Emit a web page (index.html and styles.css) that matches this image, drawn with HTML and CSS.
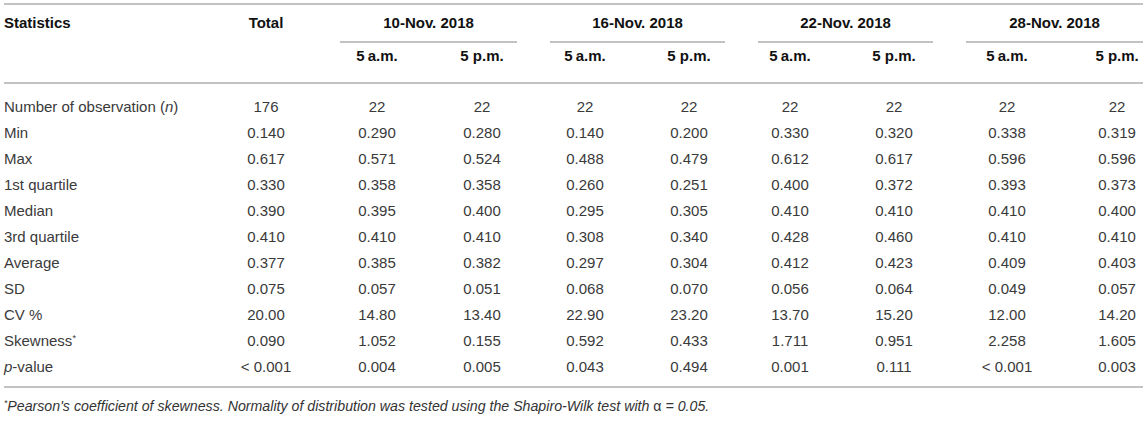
FILE: index.html
```html
<!DOCTYPE html>
<html lang="en">
<head>
    <meta charset="UTF-8">
    <meta name="viewport" content="width=device-width, initial-scale=1.0">
    <title>Descriptive Statistics</title>
    <link rel="stylesheet" href="styles.css">
</head>
<body>

    <div class="page">
        <table class="stats">
            <colgroup>
                <col class="col-label">
                <col class="col-total">
                <col class="col-a">
                <col class="col-b">
                <col class="col-b">
                <col class="col-c">
                <col class="col-d">
                <col class="col-e">
                <col class="col-f">
                <col class="col-g">
            </colgroup>
            <thead>
                <!-- Dates -->
                <tr class="dates">
                    <th class="label">Statistics</th>
                    <th>Total</th>
                    <th colspan="2"><div class="group">10-Nov. 2018</div></th>
                    <th colspan="2"><div class="group">16-Nov. 2018</div></th>
                    <th colspan="2"><div class="group">22-Nov. 2018</div></th>
                    <th colspan="2"><div class="group">28-Nov. 2018</div></th>
                </tr>
                <!-- Times -->
                <tr class="sub">
                    <th class="label"></th>
                    <th></th>
                    <th>5&#8201;a.m.</th>
                    <th>5 p.m.</th>
                    <th>5&#8201;a.m.</th>
                    <th>5 p.m.</th>
                    <th>5&#8201;a.m.</th>
                    <th>5 p.m.</th>
                    <th>5&#8201;a.m.</th>
                    <th>5 p.m.</th>
                </tr>
            </thead>
            <tbody>
                <tr>
                    <td class="label">Number of observation (<i>n</i>)</td>
                    <td>176</td><td>22</td><td>22</td><td>22</td><td>22</td><td>22</td><td>22</td><td>22</td><td>22</td>
                </tr>
                <tr>
                    <td class="label">Min</td>
                    <td>0.140</td><td>0.290</td><td>0.280</td><td>0.140</td><td>0.200</td><td>0.330</td><td>0.320</td><td>0.338</td><td>0.319</td>
                </tr>
                <tr>
                    <td class="label">Max</td>
                    <td>0.617</td><td>0.571</td><td>0.524</td><td>0.488</td><td>0.479</td><td>0.612</td><td>0.617</td><td>0.596</td><td>0.596</td>
                </tr>
                <tr>
                    <td class="label">1st quartile</td>
                    <td>0.330</td><td>0.358</td><td>0.358</td><td>0.260</td><td>0.251</td><td>0.400</td><td>0.372</td><td>0.393</td><td>0.373</td>
                </tr>
                <tr>
                    <td class="label">Median</td>
                    <td>0.390</td><td>0.395</td><td>0.400</td><td>0.295</td><td>0.305</td><td>0.410</td><td>0.410</td><td>0.410</td><td>0.400</td>
                </tr>
                <tr>
                    <td class="label">3rd quartile</td>
                    <td>0.410</td><td>0.410</td><td>0.410</td><td>0.308</td><td>0.340</td><td>0.428</td><td>0.460</td><td>0.410</td><td>0.410</td>
                </tr>
                <tr>
                    <td class="label">Average</td>
                    <td>0.377</td><td>0.385</td><td>0.382</td><td>0.297</td><td>0.304</td><td>0.412</td><td>0.423</td><td>0.409</td><td>0.403</td>
                </tr>
                <tr>
                    <td class="label">SD</td>
                    <td>0.075</td><td>0.057</td><td>0.051</td><td>0.068</td><td>0.070</td><td>0.056</td><td>0.064</td><td>0.049</td><td>0.057</td>
                </tr>
                <tr>
                    <td class="label">CV %</td>
                    <td>20.00</td><td>14.80</td><td>13.40</td><td>22.90</td><td>23.20</td><td>13.70</td><td>15.20</td><td>12.00</td><td>14.20</td>
                </tr>
                <tr>
                    <td class="label">Skewness<sup>*</sup></td>
                    <td>0.090</td><td>1.052</td><td>0.155</td><td>0.592</td><td>0.433</td><td>1.711</td><td>0.951</td><td>2.258</td><td>1.605</td>
                </tr>
                <tr>
                    <td class="label"><i>p</i>-value</td>
                    <td>&lt; 0.001</td><td>0.004</td><td>0.005</td><td>0.043</td><td>0.494</td><td>0.001</td><td>0.111</td><td>&lt; 0.001</td><td>0.003</td>
                </tr>
            </tbody>
        </table>

        <p class="footnote"><sup>*</sup>Pearson's coefficient of skewness. Normality of distribution was tested using the Shapiro-Wilk test with <span class="alpha">α</span> = 0.05.</p>
    </div>

</body>
</html>
```

FILE: styles.css
```css
/* Table page */
* {
    box-sizing: border-box;
    margin: 0;
    padding: 0;
}
body {
    font-family: "Liberation Sans", Arial, sans-serif;
    background-color: #ffffff;
    color: #3a3a3a;
}
.page {
    padding: 3px 2px 0 4px;
}
.stats {
    width: 1139px;
    table-layout: fixed;
    border-collapse: separate;
    border-spacing: 0;
    border-top: 2px solid #c2c2c2;
    border-bottom: 2px solid #c2c2c2;
    font-size: 15px;
}

/* Column widths */
.col-label { width: 188px; }
.col-total { width: 115px; }
.col-a { width: 107px; }
.col-b { width: 103px; }
.col-c { width: 105px; }
.col-d { width: 97px; }
.col-e { width: 111px; }
.col-f { width: 115px; }
.col-g { width: 95px; }

th,
td {
    text-align: center;
    padding-left: 33px;
    white-space: nowrap;
}
th {
    color: #111;
    font-weight: bold;
}
.stats .label {
    text-align: left;
    padding-left: 0;
}

/* Header rows */
.dates th {
    line-height: 36px;
    vertical-align: top;
}
.group {
    border-bottom: 2px solid #c2c2c2;
}
.sub th {
    line-height: 26px;
    padding-bottom: 13px;
    border-bottom: 2px solid #c2c2c2;
}
.sub th:last-child,
tbody td:last-child {
    padding-left: 43px;
}

/* Body rows */
td {
    line-height: 26px;
}
tbody tr:first-child td {
    padding-top: 10px;
}
tbody tr:last-child td {
    padding-bottom: 6px;
}
sup {
    font-size: 0.6em;
    vertical-align: 0.6em;
    line-height: 0;
}

/* Footnote */
.footnote {
    margin-top: 10px;
    font-size: 14.2px;
    font-style: italic;
    line-height: 17px;
    color: #333;
}
.footnote .alpha {
    font-style: normal;
}
```
